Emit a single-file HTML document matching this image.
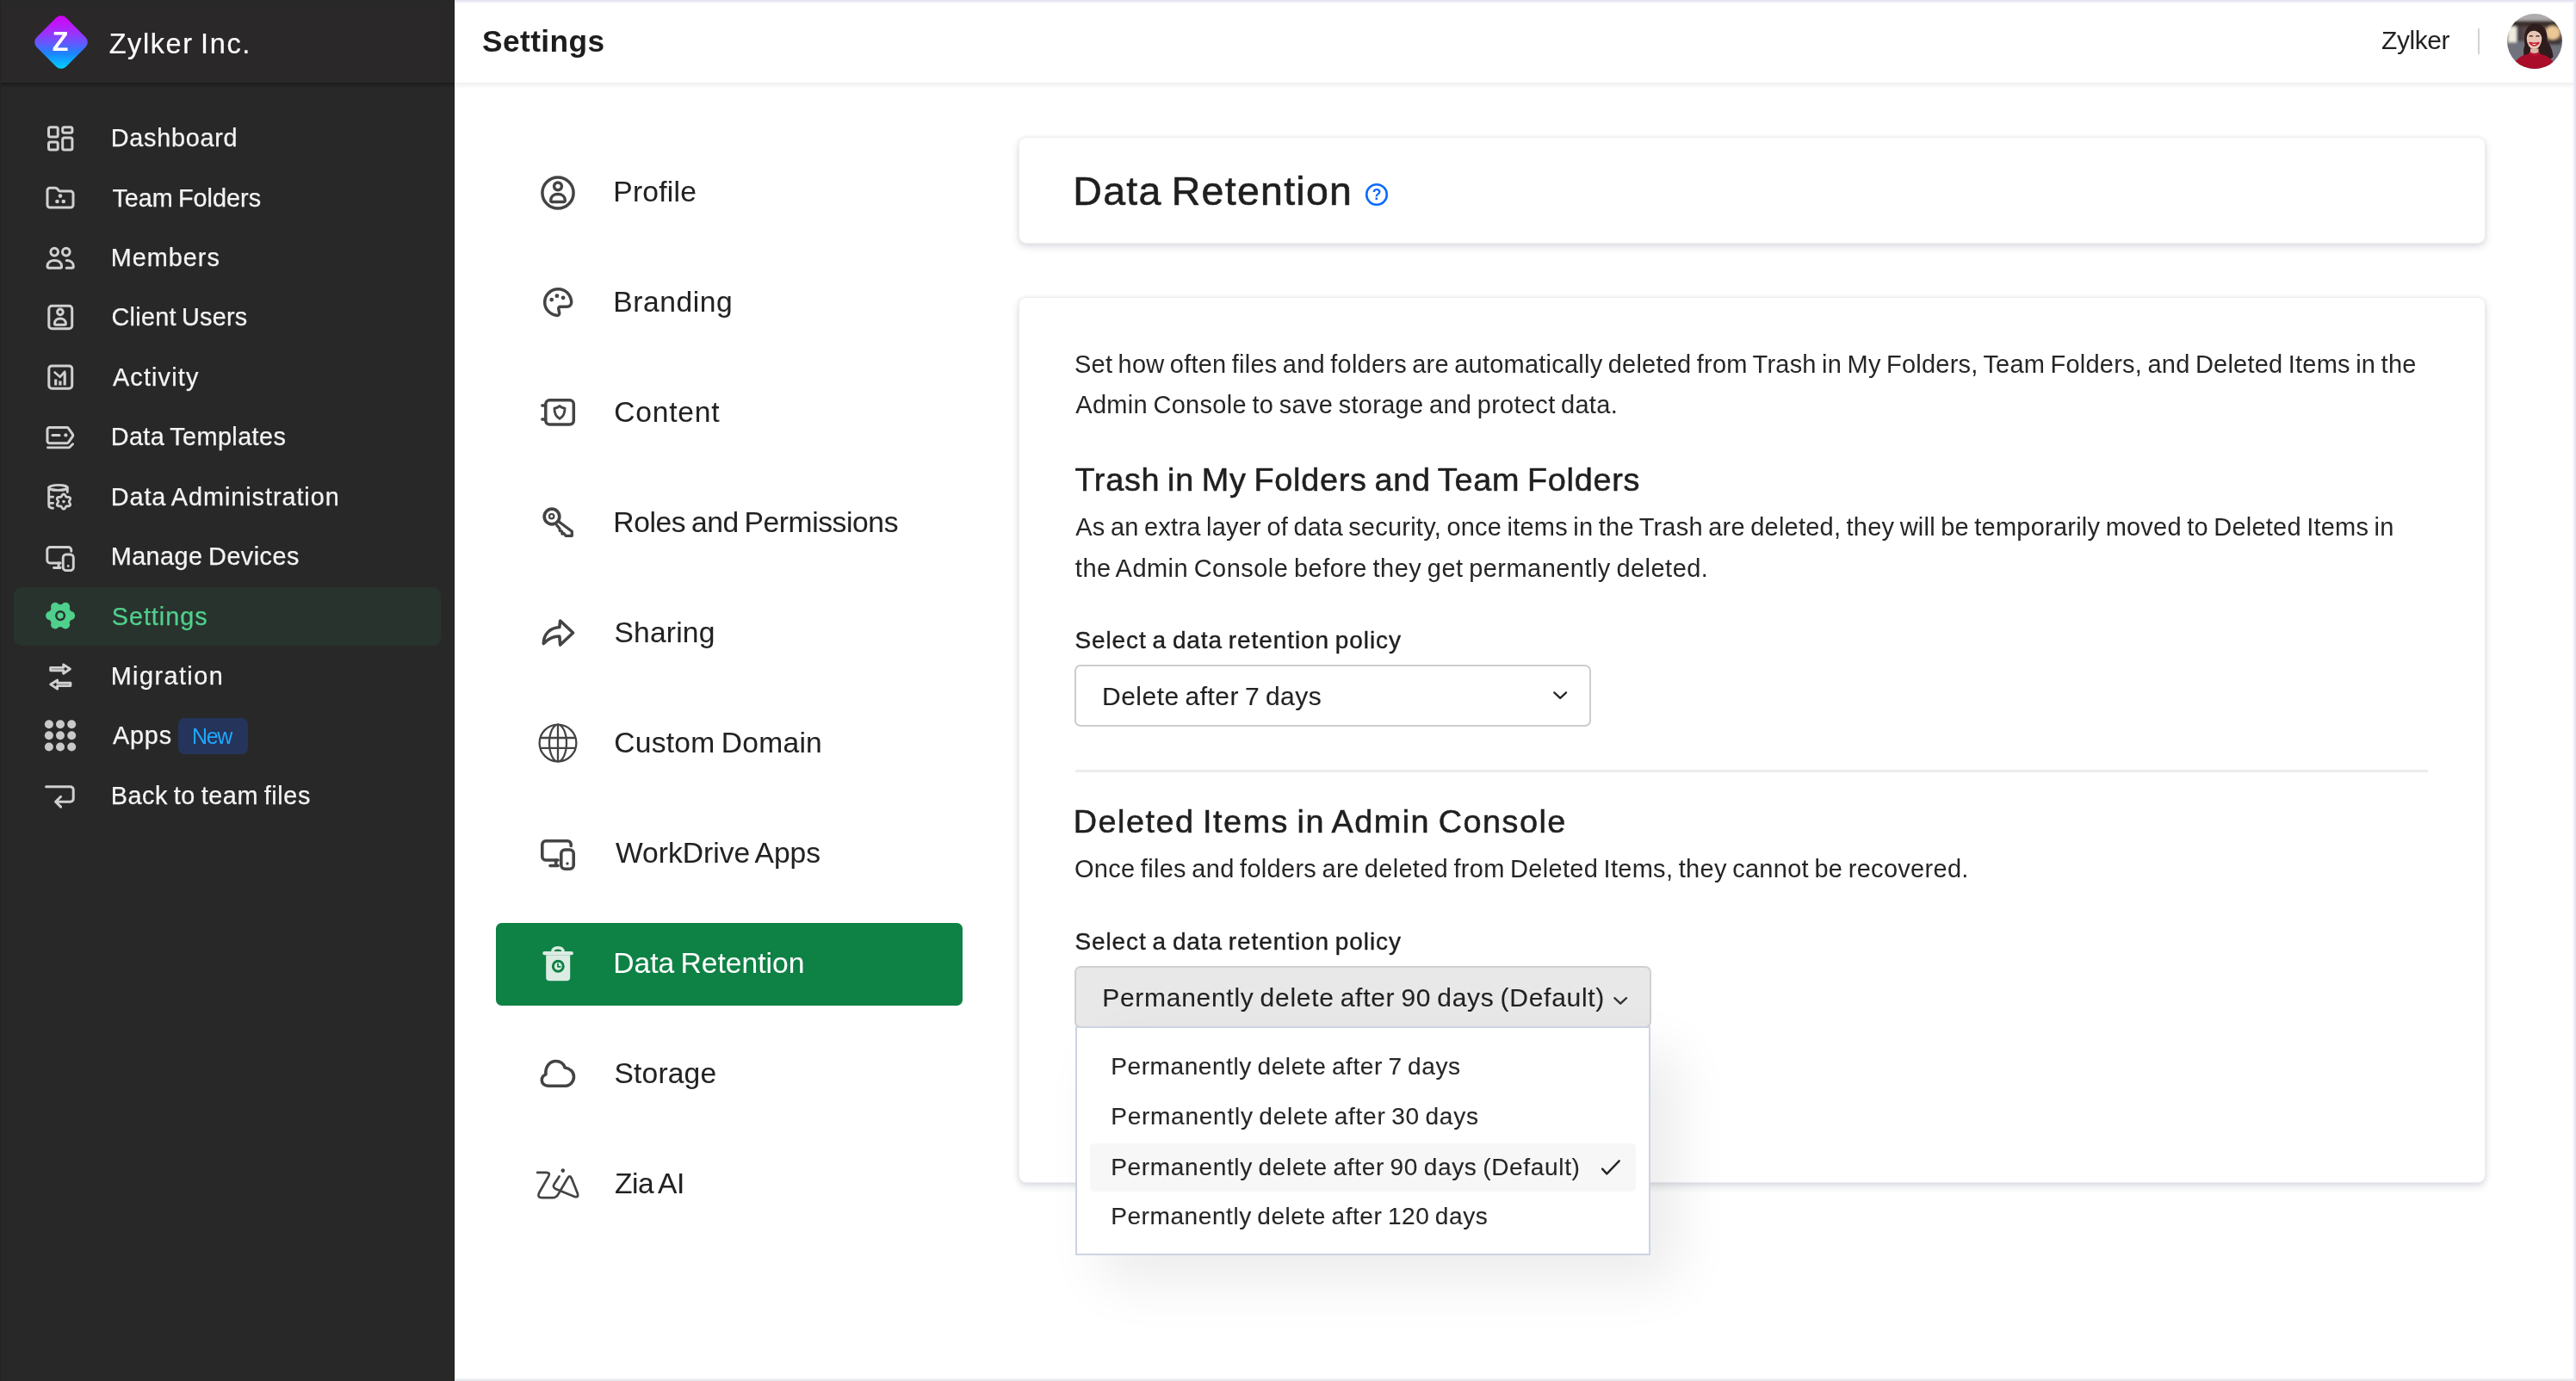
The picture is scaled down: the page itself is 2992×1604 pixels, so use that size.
<!DOCTYPE html>
<html lang="en">
<head>
<meta charset="utf-8">
<title>Settings - Data Retention</title>
<style>

*{box-sizing:border-box;margin:0;padding:0}
html,body{width:2992px;height:1604px;overflow:hidden;background:#fff}
body{font-family:"Liberation Sans",Arial,sans-serif;color:#222;-webkit-font-smoothing:antialiased}
#app{position:relative;width:2992px;height:1604px;overflow:hidden;background:#fff;will-change:transform}
.t{position:absolute;white-space:nowrap;line-height:1;display:block}
svg{position:absolute;overflow:visible}
.sidebar{position:absolute;left:0;top:0;width:528px;height:1604px;background:#282828;z-index:5}
.sidebar .head{position:absolute;left:0;top:0;width:528px;height:96px}
.sidebar .head:before{content:"";position:absolute;left:2px;top:8px;width:510px;height:88px;background:#2b2829}
.sidebar .head:after{content:"";position:absolute;left:0;top:96px;width:528px;height:7px;background:linear-gradient(rgba(0,0,0,.34),rgba(0,0,0,.10) 55%,rgba(0,0,0,0))}
.sidebar .edge{position:absolute;left:0;top:0;width:528px;height:1604px;border-left:1.5px solid #232323;border-right:1px solid #1d1d1d;z-index:2;pointer-events:none}
.sidebar ul{list-style:none}
.sidebar li.active-bg{position:absolute;left:16px;top:681.5px;width:496px;height:68.500px;border-radius:9px;background:#29332d}
.si{fill:none;stroke:#d0d0d0;stroke-width:3;stroke-linecap:round;stroke-linejoin:round}
.badge{position:absolute;left:207px;top:834px;width:81px;height:42px;border-radius:7px;background:#25345a}
.topbar{position:absolute;left:528px;top:0;width:2464px;height:96px;background:#fff;box-shadow:0 2px 7px rgba(30,30,60,.10);z-index:4}
.topbar .sep{position:absolute;left:2349.5px;top:33px;width:2px;height:30px;background:#d4d4d4}
.avatar{position:absolute;left:2384px;top:16px;width:64px;height:64px;border-radius:50%;overflow:hidden}
.nav{position:absolute;left:528px;top:96px;width:640px;height:1508px}
.nav .active{position:absolute;left:48px;top:976px;width:542px;height:96px;border-radius:6.500px;background:#0e8145}
.ni{fill:none;stroke:#444;stroke-width:3.5;stroke-linecap:round;stroke-linejoin:round}
.card{position:absolute;background:#fff;border-radius:9px;border:1px solid #eeeef2;box-shadow:0 4px 9px rgba(45,55,85,.15),0 0 5px rgba(45,55,85,.07)}
.c1{left:1183px;top:159px;width:1703.500px;height:123.500px}
.c2{left:1183px;top:345px;width:1703.500px;height:1028.500px}
.hr{position:absolute;left:1249px;top:894px;width:1571px;height:2.500px;background:#ececec}
.sel{position:absolute;border:2px solid #cdcdcd;border-radius:7px;background:#fff}
.sel1{left:1248px;top:772px;width:600px;height:72px}
.sel2{left:1248px;top:1122px;width:670px;height:72px;background:#e8e8e8;border-color:#d0d0d0}
.dd{position:absolute;left:1249px;top:1192px;width:668px;height:266px;background:#fff;border:2px solid #ccd3e2;box-shadow:30px 30px 60px rgba(0,0,0,.078);z-index:3}
.dd .hl{position:absolute;left:14.500px;top:133.500px;width:634px;height:56px;border-radius:5px;background:#f7f7f7}

.frame{position:absolute;left:528px;top:0;width:2464px;height:1604px;pointer-events:none;z-index:20;
 background:linear-gradient(#e4e2ef,#e8e6f2 1.6px,rgba(238,236,246,.5) 2.6px,rgba(255,255,255,0) 4.5px) top/100% 5px no-repeat,
 linear-gradient(to left,#e6e4f0,#e7e5f1 1.9px,rgba(240,238,247,.5) 2.8px,rgba(255,255,255,0) 4.5px) right/5px 100% no-repeat,
 linear-gradient(to top,#e4e8ed,#e6eaef 1.8px,rgba(240,243,247,.5) 2.8px,rgba(255,255,255,0) 4.5px) bottom/100% 5px no-repeat}

</style>
</head>
<body>
<div id="app">
<aside class="sidebar">
<div class="edge"></div>
<div class="head">
<svg style="left:35.5px;top:14.4px" width="70" height="70" viewBox="0 0 70 70"><defs><linearGradient id="lg" gradientUnits="userSpaceOnUse" x1="0" y1="4" x2="0" y2="66"><stop offset="0" stop-color="#d800f5"/><stop offset=".3" stop-color="#a32cfb"/><stop offset=".52" stop-color="#6259ff"/><stop offset=".72" stop-color="#1a86ff"/><stop offset="1" stop-color="#00d4ff"/></linearGradient></defs><path d="M29.300 6.600a8 8 0 0 1 11.400 0L63.400 29.300a8 8 0 0 1 0 11.400L40.700 63.400a8 8 0 0 1-11.400 0L6.600 40.700a8 8 0 0 1 0-11.400Z" fill="url(#lg)"/></svg>
<span class="t" style="left:60.69px;top:32.88px;font-size:30.5px;letter-spacing:0.556px;color:#fff;font-weight:700;">Z</span>
<span class="t" style="left:126.67px;top:34.99px;font-size:32.5px;letter-spacing:1.582px;word-spacing:-2.11px;color:#fff;-webkit-text-stroke:0.2px currentColor;">Zylker Inc.</span>
</div>
<ul>
<li class="active-bg"></li>
<li><svg class="si" style="left:52px;top:143.00px" width="36" height="36" viewBox="0 0 36 36"><rect x="4.5" y="4.7" width="10.7" height="11.2" rx="2"/><rect x="20.7" y="4.7" width="11.2" height="6.6" rx="2"/><rect x="4.5" y="21.9" width="10.7" height="9.2" rx="2"/><rect x="20.7" y="17.1" width="11.2" height="14" rx="2"/></svg><span class="t" style="left:128.69px;top:146.22px;font-size:28.8px;letter-spacing:0.759px;color:#f4f4f4;-webkit-text-stroke:0.25px currentColor;">Dashboard</span></li>
<li><svg class="si" style="left:52px;top:212.42px" width="36" height="36" viewBox="0 0 36 36"><path d="M3 9.2a3 3 0 0 1 3-3h6.2a3 3 0 0 1 2.3 1.1l1.4 1.7a3 3 0 0 0 2.3 1.1H30a3 3 0 0 1 3 3V26a3 3 0 0 1-3 3H6a3 3 0 0 1-3-3Z"/><g fill="#d0d0d0" stroke="none"><circle cx="18" cy="15.6" r="2.3"/><circle cx="14.4" cy="22" r="2.3"/><circle cx="21.8" cy="22" r="2.3"/></g></svg><span class="t" style="left:130.40px;top:215.64px;font-size:28.8px;letter-spacing:0.009px;word-spacing:-1.87px;color:#f4f4f4;-webkit-text-stroke:0.25px currentColor;">Team Folders</span></li>
<li><svg class="si" style="left:52px;top:281.84px" width="36" height="36" viewBox="0 0 36 36"><circle cx="11.2" cy="10.6" r="4.3"/><circle cx="24.8" cy="10.6" r="4.3"/><path d="M3 27.4C3 23 6.5 20.4 11.3 20.4s8.3 2.6 8.3 7q0 1.8-1.7 1.8H4.7Q3 29.200 3 27.400Z"/><path d="M25.300 20.600C30.300 20.600 33.300 23.300 33.300 27.400q0 1.800-1.700 1.800H25.200"/></svg><span class="t" style="left:128.69px;top:285.06px;font-size:28.8px;letter-spacing:1.021px;color:#f4f4f4;-webkit-text-stroke:0.25px currentColor;">Members</span></li>
<li><svg class="si" style="left:52px;top:351.26px" width="36" height="36" viewBox="0 0 36 36"><rect x="4.8" y="4.25" width="26.9" height="26.4" rx="3.5"/><circle cx="17.9" cy="11.4" r="3.3"/><path d="M11.4 24.8C11.400 21.300 14 18.900 17.900 18.900s6.500 2.400 6.500 5.900q0 1.500-1.400 1.500H12.800q-1.400 0-1.400-1.500Z"/></svg><span class="t" style="left:129.59px;top:354.48px;font-size:28.8px;letter-spacing:0.248px;word-spacing:-1.87px;color:#f4f4f4;-webkit-text-stroke:0.25px currentColor;">Client Users</span></li>
<li><svg class="si" style="left:52px;top:420.68px" width="36" height="36" viewBox="0 0 36 36"><rect x="4.8" y="3.9" width="26.9" height="26.4" rx="3.5"/><path d="M12.700 26.500V19.500M17.900 26.500V21.500M23.200 26.500V11.500" stroke-width="3.2" stroke-linecap="butt"/><path d="M11.600 11.500L17.700 16.800L23.200 10.600" stroke-width="2.6"/></svg><span class="t" style="left:130.99px;top:423.90px;font-size:28.8px;letter-spacing:1.157px;color:#f4f4f4;-webkit-text-stroke:0.25px currentColor;">Activity</span></li>
<li><svg class="si" style="left:52px;top:490.10px" width="36" height="36" viewBox="0 0 36 36"><path d="M5.500 6.600H25.800a2 2 0 0 1 1.600 .8L32.200 14.200a2.400 2.400 0 0 1 0 2.800L27.400 23.900a2 2 0 0 1-1.600 .8H5.500a2.500 2.500 0 0 1-2.500-2.500V9.100a2.500 2.500 0 0 1 2.500-2.500Z"/><path d="M9 15.400H17"/><circle cx="24.400" cy="15.400" r="2.100" fill="#d0d0d0" stroke="none"/><path d="M3.400 29.800H27.800a2 2 0 0 0 1.500-.7L32.600 25.700" stroke-width="2.800"/></svg><span class="t" style="left:128.69px;top:493.32px;font-size:28.8px;letter-spacing:0.422px;word-spacing:-1.87px;color:#f4f4f4;-webkit-text-stroke:0.25px currentColor;">Data Templates</span></li>
<li><svg class="si" style="left:52px;top:559.52px" width="36" height="36" viewBox="0 0 36 36"><ellipse cx="15.500" cy="6.400" rx="10.800" ry="3" stroke-width="2.900"/><path d="M4.700 6.400V26.500Q4.700 30.200 9.500 30.200M26.300 6.400V11.500" stroke-width="2.900"/><path d="M6.600 17.200H9.600M6.600 24.400H9.600" stroke-width="2.800"/><path d="M28.15 22.60 L28.23 23.01 L28.46 23.46 L28.79 23.96 L29.15 24.53 L29.46 25.15 L29.65 25.79 L29.67 26.41 L29.48 26.95 L29.10 27.38 L28.56 27.67 L27.91 27.83 L27.22 27.87 L26.55 27.84 L25.95 27.81 L25.45 27.83 L25.05 27.97 L24.73 28.25 L24.46 28.67 L24.19 29.20 L23.88 29.80 L23.50 30.38 L23.04 30.86 L22.51 31.19 L21.95 31.30 L21.39 31.19 L20.86 30.86 L20.40 30.38 L20.02 29.80 L19.71 29.20 L19.44 28.67 L19.17 28.25 L18.85 27.97 L18.45 27.83 L17.95 27.81 L17.35 27.84 L16.68 27.87 L15.99 27.83 L15.34 27.67 L14.80 27.38 L14.42 26.95 L14.23 26.41 L14.25 25.79 L14.44 25.15 L14.75 24.53 L15.11 23.96 L15.44 23.46 L15.67 23.01 L15.75 22.60 L15.67 22.19 L15.44 21.74 L15.11 21.24 L14.75 20.67 L14.44 20.05 L14.25 19.41 L14.23 18.79 L14.42 18.25 L14.80 17.82 L15.34 17.53 L15.99 17.37 L16.68 17.33 L17.35 17.36 L17.95 17.39 L18.45 17.37 L18.85 17.23 L19.17 16.95 L19.44 16.53 L19.71 16.00 L20.02 15.40 L20.40 14.82 L20.86 14.34 L21.39 14.01 L21.95 13.90 L22.51 14.01 L23.04 14.34 L23.50 14.82 L23.88 15.40 L24.19 16.00 L24.46 16.53 L24.73 16.95 L25.05 17.23 L25.45 17.37 L25.95 17.39 L26.55 17.36 L27.22 17.33 L27.91 17.37 L28.56 17.53 L29.10 17.82 L29.48 18.25 L29.67 18.79 L29.65 19.41 L29.46 20.05 L29.15 20.67 L28.79 21.24 L28.46 21.74 L28.23 22.19Z" stroke-width="2.700" fill="#282828"/><circle cx="21.950" cy="22.600" r="1.800" fill="#d0d0d0" stroke="none"/></svg><span class="t" style="left:128.69px;top:562.74px;font-size:28.8px;letter-spacing:0.954px;word-spacing:-1.87px;color:#f4f4f4;-webkit-text-stroke:0.25px currentColor;">Data Administration</span></li>
<li><svg class="si" style="left:52px;top:628.94px" width="36" height="36" viewBox="0 0 36 36"><g transform="translate(1.3 1.6) scale(.8375)" stroke-width="3.500" color="#d0d0d0"><path d="M35.2 11.5V9.8a4 4 0 0 0-4-4H5.8a4 4 0 0 0-4 4V24a4 4 0 0 0 4 4H20"/><path d="M17.7 28v6.3M11 34.5h9"/><rect x="23.8" y="16" width="14.4" height="22.2" rx="4.4"/><circle cx="31" cy="32" r="1.7" fill="currentColor" stroke="none"/></g></svg><span class="t" style="left:128.69px;top:632.16px;font-size:28.8px;letter-spacing:0.462px;word-spacing:-1.87px;color:#f4f4f4;-webkit-text-stroke:0.25px currentColor;">Manage Devices</span></li>
<li><svg class="si" style="left:52px;top:698.36px" width="36" height="36" viewBox="0 0 36 36"><g fill="#4fd08c" stroke="none"><circle cx="18.100" cy="17.100" r="13.200"/><circle cx="30.10" cy="17.10" r="5.050"/><circle cx="24.10" cy="27.49" r="5.050"/><circle cx="12.10" cy="27.49" r="5.050"/><circle cx="6.10" cy="17.10" r="5.050"/><circle cx="12.10" cy="6.71" r="5.050"/><circle cx="24.10" cy="6.71" r="5.050"/></g><circle cx="18.100" cy="17.100" r="4.800" fill="#4fd08c" stroke="#29332d" stroke-width="2.500"/></svg><span class="t" style="left:129.74px;top:701.58px;font-size:28.8px;letter-spacing:0.969px;color:#4fd08c;-webkit-text-stroke:0.25px currentColor;">Settings</span></li>
<li><svg class="si" style="left:52px;top:767.78px" width="36" height="36" viewBox="0 0 36 36"><path d="M6.700 7.400H21.700V3.900L29.400 9L21.700 14.300V10.700H6.700Z" stroke-width="2.900"/><path d="M29.900 25.300H14.600V21.900L6.700 26.900L14.600 32.100V28.600H29.900Z" stroke-width="2.900"/></svg><span class="t" style="left:128.69px;top:771.00px;font-size:28.8px;letter-spacing:1.441px;color:#f4f4f4;-webkit-text-stroke:0.25px currentColor;">Migration</span></li>
<li><svg class="si" style="left:52px;top:837.20px" width="36" height="36" viewBox="0 0 36 36"><g fill="#c9c9c9" stroke="none"><circle cx="4.9" cy="4.2" r="5"/><circle cx="18" cy="4.2" r="5"/><circle cx="31.2" cy="4.2" r="5"/><circle cx="4.9" cy="17.3" r="5"/><circle cx="18" cy="17.3" r="5"/><circle cx="31.2" cy="17.3" r="5"/><circle cx="4.9" cy="30.5" r="5"/><circle cx="18" cy="30.5" r="5"/><circle cx="31.2" cy="30.5" r="5"/></g></svg><span class="t" style="left:130.99px;top:840.42px;font-size:28.8px;letter-spacing:0.817px;color:#f4f4f4;-webkit-text-stroke:0.25px currentColor;">Apps</span></li>
<li><svg class="si" style="left:52px;top:906.62px" width="36" height="36" viewBox="0 0 36 36"><path d="M1.600 6.700H29.700a3.500 3.500 0 0 1 3.500 3.500V20.700a3.500 3.500 0 0 1-3.500 3.500H13.500"/><path d="M18.600 18.300L12.600 24.200L18.600 30.100"/></svg><span class="t" style="left:128.69px;top:909.84px;font-size:28.8px;letter-spacing:0.586px;word-spacing:-1.87px;color:#f4f4f4;-webkit-text-stroke:0.25px currentColor;">Back to team files</span></li>
</ul>
<div class="badge"></div>
<span class="t" style="left:222.95px;top:843.04px;font-size:25px;letter-spacing:-1.262px;color:#1ea7ff;">New</span>
</aside>
<header class="topbar">
<h1 class="t" style="left:31.98px;top:29.72px;font-size:35.3px;letter-spacing:0.430px;color:#1d1d1d;font-weight:700;">Settings</h1>
<span class="t" style="left:2238.05px;top:32.41px;font-size:30px;letter-spacing:-0.443px;color:#222;">Zylker</span>
<div class="sep"></div>
<div class="avatar"><svg style="left:0;top:0" width="64" height="64" viewBox="0 0 64 64">
<defs><filter id="bl" x="-20%" y="-20%" width="140%" height="140%"><feGaussianBlur stdDeviation="1.600"/></filter><filter id="b2"><feGaussianBlur stdDeviation=".550"/></filter></defs>
<g filter="url(#bl)"><rect x="-4" y="-4" width="72" height="13" fill="#aeabac"/><rect x="-4" y="8" width="72" height="8" fill="#3b2d2b"/><rect x="-4" y="15" width="72" height="19" fill="#5a4a46"/><rect x="-4" y="32" width="72" height="36" fill="#70727b"/>
<rect x="1" y="15" width="10" height="18" fill="#f0ebdf"/><rect x="11" y="16" width="7" height="16" fill="#4a3f4a"/><ellipse cx="53" cy="22" rx="8.500" ry="8" fill="#ecc796"/><rect x="47" y="30" width="16" height="6" fill="#3c3434"/></g>
<g filter="url(#b2)"><path d="M20.500 36C18.500 22 23 11.500 32.500 11.500S47.500 19 46.500 31C50 37 53 42 53.500 50L44 58H22C18.500 50 18.500 42 20.500 36Z" fill="#2d1b1e"/>
<ellipse cx="31.500" cy="28.800" rx="8.800" ry="12.200" fill="#e9c6b5"/>
<path d="M22.500 26.500C22.500 18.500 27 14.500 32 15s8.800 3.500 8.600 12.500C38.500 21.500 34 19.500 30.500 19.800S24.500 22 22.500 26.500Z" fill="#2d1b1e"/>
<path d="M25.800 26.300q2-1.300 4 0M33.500 26.300q2-1.300 4 0" stroke="#3a2320" stroke-width="1.400" fill="none"/>
<path d="M26 33.500Q31.500 40.500 37 33.500Q31.500 35 26 33.500Z" fill="#fff" stroke="#c4172c" stroke-width="1.400" stroke-linejoin="round"/>
<path d="M27 40.500h9.500v9h-9.500Z" fill="#deb5a2"/>
<path d="M6 66C7.500 53 16 48.500 25 46.500L31.500 48.500L38 46.500C47 48.500 55.500 53 57 66Z" fill="#a90c2b"/>
<path d="M25 46.800Q31.500 51.500 38.500 46.800L37.500 44Q31.500 48 26 44Z" fill="#b81433"/></g>
</svg></div>
</header>
<nav class="nav">
<div class="active"></div>
<a><svg class="ni" style="left:100px;top:107.5px" width="40" height="40" viewBox="0 0 40 40"><circle cx="20" cy="20" r="18.100"/><circle cx="20" cy="12.300" r="4.400"/><path d="M11.700 28.500C11.700 24.500 15 21.600 20 21.600s8.300 2.900 8.300 6.900q0 2-1.900 2H13.600q-1.900 0-1.900-2Z"/></svg><span class="t" style="left:184.29px;top:110.26px;font-size:33.6px;letter-spacing:0.235px;color:#222;-webkit-text-stroke:0.05px currentColor;">Profile</span></a>
<a><svg class="ni" style="left:100px;top:235.4px" width="40" height="40" viewBox="0 0 40 40"><path d="M20.500 4.700C11.500 4.700 4.700 11.700 4.700 20.200C4.700 28 10.500 34 18.300 35.300C20.800 35.700 22 34.500 21.700 32.500L20.800 27.800C20.500 26.200 21.400 25.300 23 25.300H30C34 25.300 36 22.800 35.700 19.500C35 11 28.700 4.700 20.500 4.700Z"/><g fill="#444" stroke="none"><circle cx="12.700" cy="17.100" r="2.400"/><circle cx="18.900" cy="12.700" r="2.400"/><circle cx="26.100" cy="14.800" r="2.400"/></g></svg><span class="t" style="left:184.29px;top:238.21px;font-size:33.6px;letter-spacing:0.581px;color:#222;-webkit-text-stroke:0.05px currentColor;">Branding</span></a>
<a><svg class="ni" style="left:100px;top:363.4px" width="40" height="40" viewBox="0 0 40 40"><rect x="5.800" y="5.800" width="32.500" height="28.300" rx="4.500"/><path d="M1.800 11.900H5.500M1.800 28.100H5.500"/><path d="M22 12.600C23.600 14 25.800 14.900 28 15.100C28.200 21 26.200 25 22 27.300C17.800 25 15.800 21 16 15.100C18.200 14.900 20.400 14 22 12.600Z" stroke-width="2.900"/></svg><span class="t" style="left:185.34px;top:366.16px;font-size:33.6px;letter-spacing:0.778px;color:#222;-webkit-text-stroke:0.05px currentColor;">Content</span></a>
<a><svg class="ni" style="left:100px;top:491.3px" width="40" height="40" viewBox="0 0 40 40"><circle cx="13" cy="13" r="8.800" stroke-width="3.700"/><circle cx="12.700" cy="12.700" r="2.700" stroke-width="2.200"/><path d="M20.300 18.200L36.300 30.300V35.300H29.300L26.800 32.500L25 33L24.500 30L22.300 29.500L22 27L18.700 23" stroke-width="3.300"/></svg><span class="t" style="left:184.29px;top:494.11px;font-size:33.6px;letter-spacing:-0.394px;word-spacing:-2.18px;color:#222;-webkit-text-stroke:0.05px currentColor;">Roles and Permissions</span></a>
<a><svg class="ni" style="left:100px;top:619.3px" width="40" height="40" viewBox="0 0 40 40"><path d="M22.700 6L37.600 20L22.700 34L21.800 24C14.500 24 8.500 27 3.300 32.500C3.500 22 10 14.300 21.800 13.500Z" stroke-width="3.600"/></svg><span class="t" style="left:185.52px;top:622.06px;font-size:33.6px;letter-spacing:0.179px;color:#222;-webkit-text-stroke:0.05px currentColor;">Sharing</span></a>
<a><svg class="ni" style="left:100px;top:747.2px" width="40" height="40" viewBox="0 0 40 40"><g stroke-width="2.300"><circle cx="20" cy="20" r="21.400"/><ellipse cx="20" cy="20" rx="10" ry="21.400"/><path d="M20 -1.400V41.400M0.500 14H39.500M0.500 25.900H39.500"/></g></svg><span class="t" style="left:185.34px;top:750.01px;font-size:33.6px;letter-spacing:0.241px;word-spacing:-2.18px;color:#222;-webkit-text-stroke:0.05px currentColor;">Custom Domain</span></a>
<a><svg class="ni" style="left:100px;top:875.2px" width="40" height="40" viewBox="0 0 40 40"><g color="#444" stroke-width="3.600"><path d="M35.2 11.5V9.8a4 4 0 0 0-4-4H5.8a4 4 0 0 0-4 4V24a4 4 0 0 0 4 4H20"/><path d="M17.7 28v6.3M11 34.5h9"/><rect x="23.8" y="16" width="14.4" height="22.2" rx="4.4"/><circle cx="31" cy="32" r="1.7" fill="currentColor" stroke="none"/></g></svg><span class="t" style="left:186.90px;top:877.96px;font-size:33.6px;letter-spacing:0.022px;word-spacing:-2.18px;color:#222;-webkit-text-stroke:0.05px currentColor;">WorkDrive Apps</span></a>
<a><svg class="ni" style="left:100px;top:1003.1px" width="40" height="40" viewBox="0 0 40 40"><g fill="#dcece3" stroke="none"><rect x="2.300" y="6.100" width="35.600" height="4.200" rx="2.100"/><path d="M6.200 10.200H34.200V36.200a4 4 0 0 1-4 4H10.200a4 4 0 0 1-4-4Z"/></g><path d="M13.900 6.500C13.900 3 16.500 1.700 20 1.700s6.100 1.300 6.100 4.800" fill="none" stroke="#dcece3" stroke-width="3.400"/><circle cx="20.300" cy="23.300" r="6" fill="#dcece3" stroke="#0e8145" stroke-width="3"/><path d="M20 20.500V23.800H22.800" fill="none" stroke="#0e8145" stroke-width="1.800"/></svg><span class="t" style="left:184.29px;top:1005.91px;font-size:33.6px;letter-spacing:0.029px;word-spacing:-2.18px;color:#fff;-webkit-text-stroke:0.05px currentColor;">Data Retention</span></a>
<a><svg class="ni" style="left:100px;top:1131.1px" width="40" height="40" viewBox="0 0 40 40"><path d="M8.600 34.200C4.200 34.200 1.300 31.200 1.300 27.500C1.300 24.400 3 22 6 20.800C5 12 10.500 5.500 17.700 5.500C22.500 5.500 26.500 8.500 28.200 13C34 14 38.500 18 38.500 23.600C38.500 29.600 34 34.200 29 34.200Z" stroke-width="3.600"/></svg><span class="t" style="left:185.52px;top:1133.86px;font-size:33.6px;letter-spacing:0.164px;color:#222;-webkit-text-stroke:0.05px currentColor;">Storage</span></a>
<a><svg class="ni" style="left:100px;top:1259.0px" width="40" height="40" viewBox="0 0 40 40"><path d="M-3.800 6.900H6.500Q11.500 6.900 9.200 11.200L-1.600 30Q-4.600 36.200 2 36.200H14Q18 36.200 20.200 32.400L31.600 13Q33.900 9.500 35.800 13.600L42.800 31Q44.500 36.600 39 34.700L17.600 26Q13.500 24 15.600 20.400L21.500 11.400" stroke-width="2.700"/><circle cx="25.800" cy="4.600" r="2.300" fill="#444" stroke="none"/></svg><span class="t" style="left:185.98px;top:1261.81px;font-size:33.6px;letter-spacing:-0.471px;word-spacing:-2.18px;color:#222;-webkit-text-stroke:0.05px currentColor;">Zia AI</span></a>
</nav>
<main>
<section class="card c1"></section>
<section class="card c2"></section>
<h2 class="t" style="left:1246.29px;top:198.64px;font-size:46.5px;letter-spacing:1.265px;word-spacing:-3.02px;color:#1f1f1f;-webkit-text-stroke:0.6px currentColor;font-weight:400;">Data Retention</h2>
<svg style="left:1584px;top:211px" width="30" height="30" viewBox="0 0 30 30"><circle cx="15" cy="15" r="11.800" fill="none" stroke="#0b6bff" stroke-width="2.600"/></svg>
<span class="t" style="left:1593.69px;top:217.50px;font-size:17.6px;color:#0b6bff;font-weight:700;">?</span>
<p class="t" style="left:1247.98px;top:408.65px;font-size:29px;letter-spacing:0.221px;word-spacing:-1.89px;color:#262626;">Set how often files and folders are automatically deleted from Trash in My Folders, Team Folders, and Deleted Items in the</p>
<p class="t" style="left:1249.24px;top:456.25px;font-size:29px;letter-spacing:0.304px;word-spacing:-1.89px;color:#262626;">Admin Console to save storage and protect data.</p>
<h3 class="t" style="left:1248.40px;top:538.90px;font-size:37.8px;letter-spacing:0.740px;word-spacing:-2.46px;color:#1f1f1f;-webkit-text-stroke:0.55px currentColor;font-weight:400;">Trash in My Folders and Team Folders</h3>
<p class="t" style="left:1249.24px;top:598.05px;font-size:29px;letter-spacing:0.225px;word-spacing:-1.89px;color:#262626;">As an extra layer of data security, once items in the Trash are deleted, they will be temporarily moved to Deleted Items in</p>
<p class="t" style="left:1248.86px;top:646.15px;font-size:29px;letter-spacing:0.460px;word-spacing:-1.89px;color:#262626;">the Admin Console before they get permanently deleted.</p>
<label class="t" style="left:1248.43px;top:729.80px;font-size:28px;letter-spacing:0.905px;word-spacing:-1.82px;color:#1f1f1f;-webkit-text-stroke:0.4px currentColor;">Select a data retention policy</label>
<div class="sel sel1"></div>
<span class="t" style="left:1280.04px;top:794.00px;font-size:30px;letter-spacing:0.488px;word-spacing:-1.95px;color:#222;-webkit-text-stroke:0.1px currentColor;">Delete after 7 days</span>
<svg style="left:1800px;top:798px" width="24" height="20" viewBox="0 0 24 20"><path d="M5.300 6.400L12.200 12.900L19.100 6.400" fill="none" stroke="#262626" stroke-width="2.300" stroke-linecap="round" stroke-linejoin="round"/></svg>
<div class="hr"></div>
<h3 class="t" style="left:1246.75px;top:936.00px;font-size:37.8px;letter-spacing:1.504px;word-spacing:-2.46px;color:#1f1f1f;-webkit-text-stroke:0.55px currentColor;font-weight:400;">Deleted Items in Admin Console</h3>
<p class="t" style="left:1247.93px;top:994.75px;font-size:29px;letter-spacing:0.291px;word-spacing:-1.89px;color:#262626;">Once files and folders are deleted from Deleted Items, they cannot be recovered.</p>
<label class="t" style="left:1248.43px;top:1080.00px;font-size:28px;letter-spacing:0.905px;word-spacing:-1.82px;color:#1f1f1f;-webkit-text-stroke:0.4px currentColor;">Select a data retention policy</label>
<div class="sel sel2"></div>
<span class="t" style="left:1280.24px;top:1144.31px;font-size:30px;letter-spacing:0.713px;word-spacing:-1.95px;color:#222;-webkit-text-stroke:0.1px currentColor;">Permanently delete after 90 days (Default)</span>
<svg style="left:1870px;top:1152px" width="24" height="20" viewBox="0 0 24 20"><path d="M5.300 7.200L12.200 13.600L19.100 7.200" fill="none" stroke="#333" stroke-width="2.300" stroke-linecap="round" stroke-linejoin="round"/></svg>
<div class="dd"><div class="hl"></div></div>
<span class="t" style="left:1290.19px;top:1225.11px;font-size:28.1px;letter-spacing:0.552px;word-spacing:-1.83px;color:#262626;-webkit-text-stroke:0.1px currentColor;z-index:4;">Permanently delete after 7 days</span>
<span class="t" style="left:1290.19px;top:1283.21px;font-size:28.1px;letter-spacing:0.704px;word-spacing:-1.83px;color:#262626;-webkit-text-stroke:0.1px currentColor;z-index:4;">Permanently delete after 30 days</span>
<span class="t" style="left:1290.19px;top:1341.71px;font-size:28.1px;letter-spacing:0.637px;word-spacing:-1.83px;color:#262626;-webkit-text-stroke:0.1px currentColor;z-index:4;">Permanently delete after 90 days (Default)</span>
<span class="t" style="left:1290.19px;top:1399.41px;font-size:28.1px;letter-spacing:0.532px;word-spacing:-1.83px;color:#262626;-webkit-text-stroke:0.1px currentColor;z-index:4;">Permanently delete after 120 days</span>
<svg style="left:1856px;top:1343px;z-index:4" width="30" height="26" viewBox="0 0 30 26"><path d="M5.100 14.600L10.300 20.400L24.700 5.300" fill="none" stroke="#262626" stroke-width="2.400" stroke-linecap="round" stroke-linejoin="round"/></svg>
</main>
<div class="frame"></div>
</div>
<script>(function(){var w=window.innerWidth||0;if(w>200&&Math.abs(w-2992)>2){document.getElementById("app").style.zoom=w/2992;}})();</script>
</body>
</html>
